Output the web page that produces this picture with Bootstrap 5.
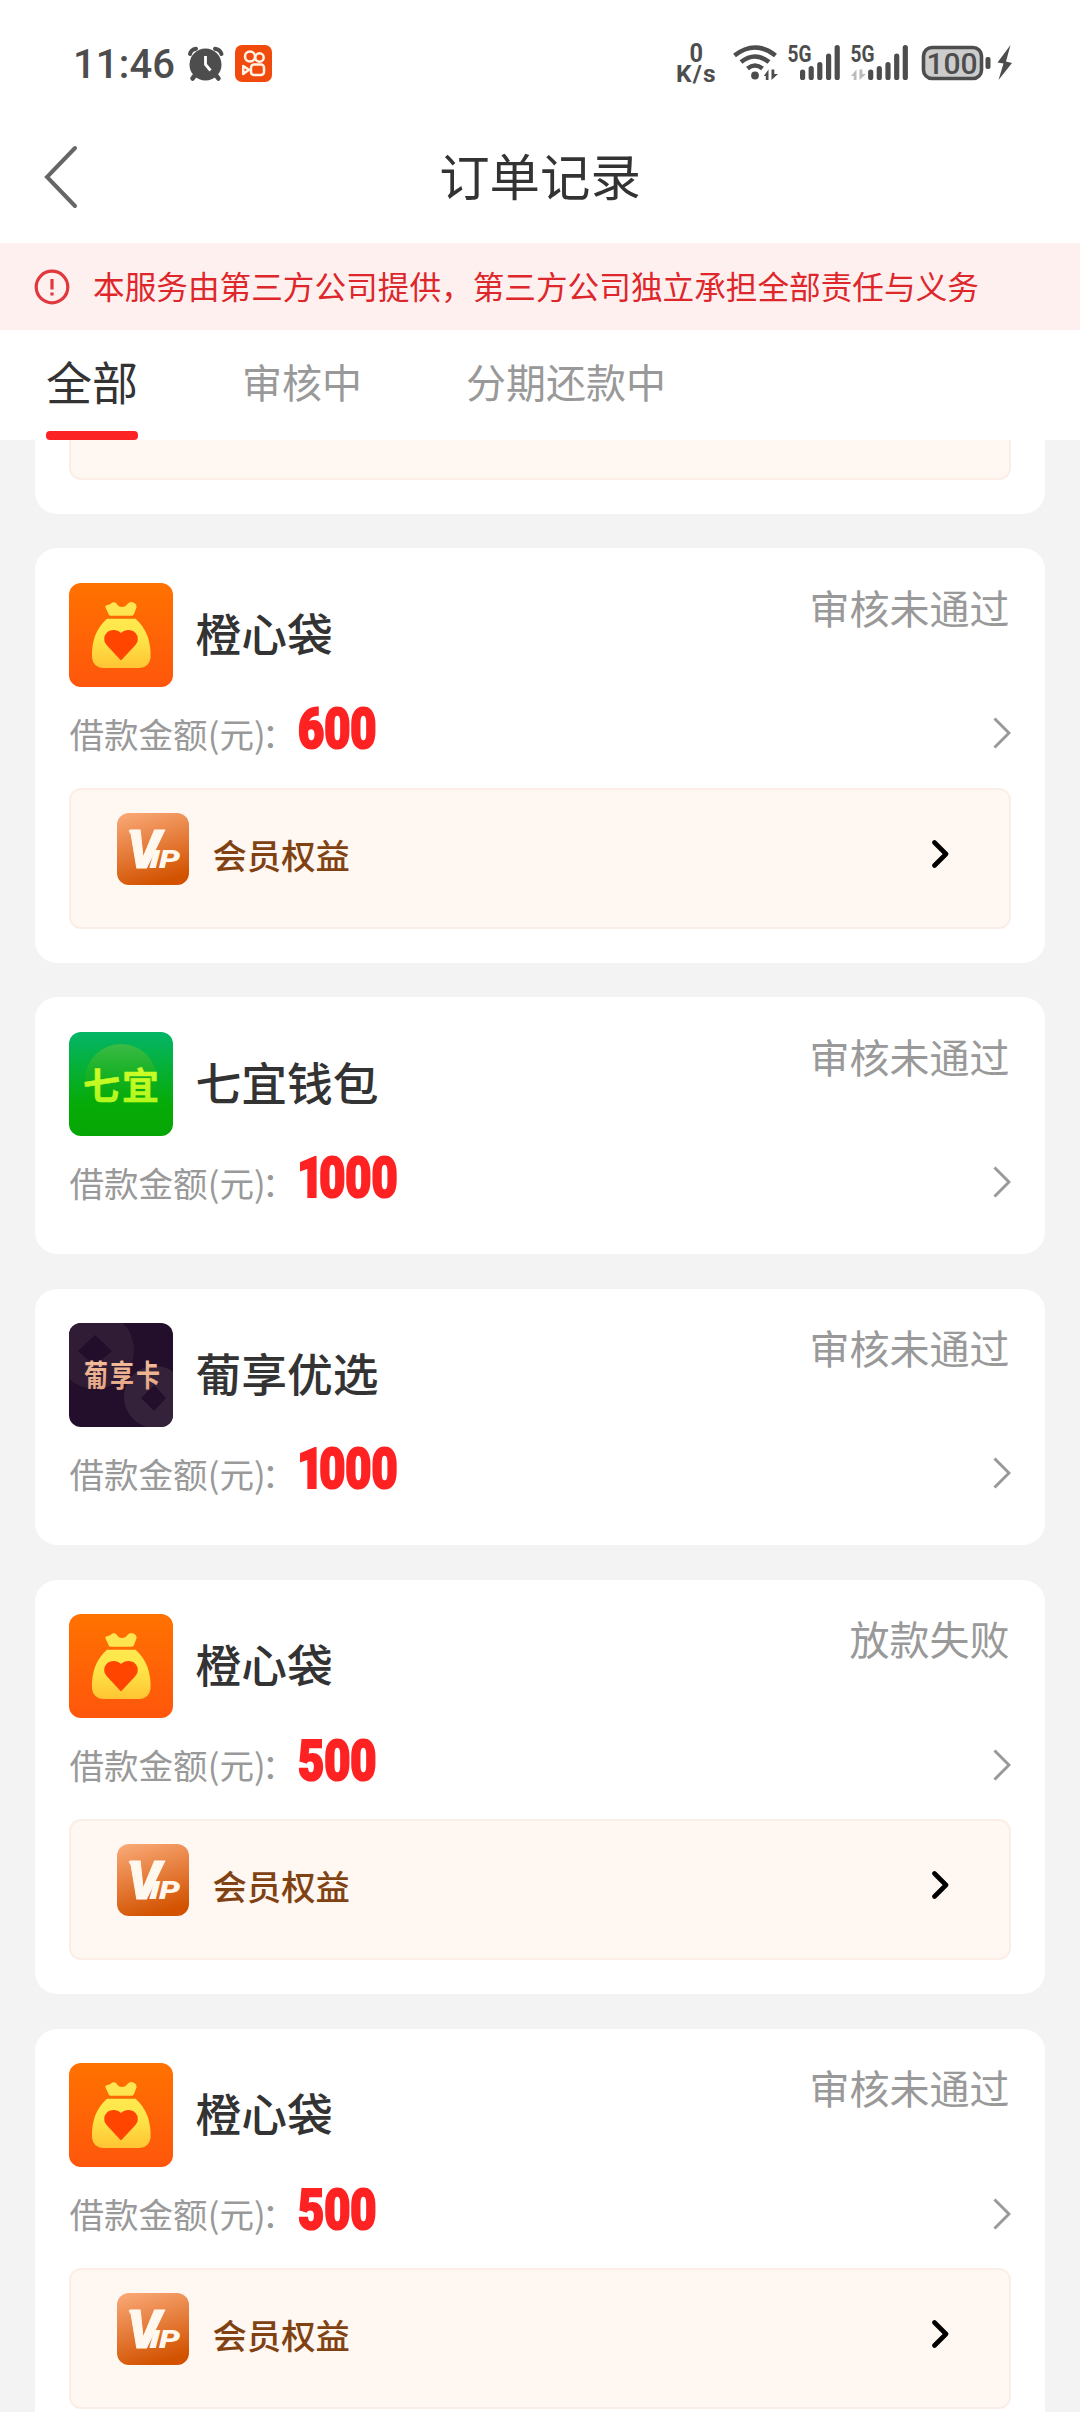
<!DOCTYPE html>
<html lang="zh-CN">
<head>
<meta charset="utf-8">
<meta name="viewport" content="width=device-width, initial-scale=1">
<title>订单记录</title>
<link href="https://cdn.jsdelivr.net/npm/bootstrap@5.3.0/dist/css/bootstrap.min.css" rel="stylesheet">
<style>
  body { font-family: "Noto Sans CJK SC", sans-serif; background: #f3f3f3; color: #333; height: 2412px; overflow: hidden; line-height: 1; }
  svg { display: block; flex: none; }
  svg text { font-family: Roboto, sans-serif; }
  .cjk-logo { font-family: "Noto Sans CJK SC", sans-serif !important; }
  .status-bar { height: 112px; padding: 14px 60px 0 66px; }
  .title-bar { height: 130.5px; padding: 0 40px; }
  .title-bar h1 { font-size: 50.4px; font-weight: 400; line-height: 1; padding-bottom: 4px; }
  .side-slot { width: 60px; }
  .notice { height: 87px; padding: 0 34px; background: #fff0f0; color: #dd272b; font-size: 31.65px; gap: 23px; }
  .notice svg { margin-top: 1px; }
  .tab-strip { height: 110.5px; padding-left: 46px; }
  .tab-strip .nav-link { padding: 0 0 7px; color: #999; font-size: 40px; display: flex; align-items: center; height: 100%; line-height: 1; }
  .tab-strip .nav-link.active { color: #333; font-size: 46px; position: relative; padding-bottom: 10px; }
  .tab-strip .nav-link + .nav-link { margin-left: 104px; }
  .tab-strip .nav-link.active::after { content: ""; position: absolute; left: 0; right: 0; bottom: 0; height: 9.5px; border-radius: 4px; background: #fc2324; }
  .orders { padding: 0 35px; gap: 34.7px; }
  .order { border: 0; border-radius: 22px; padding: 34.4px 34.4px 0; height: 256.4px; color: #333; flex: none; }
  .order.with-vip { height: 414.4px; }
  .order.cut { height: 73.7px; padding-top: 0; border-radius: 0 0 22px 22px; }
  .logo { width: 104px; height: 104px; }
  .shop { font-size: 45.8px; font-weight: 500; margin-left: 22px; padding-bottom: 4px; }
  .state { font-size: 40px; color: #999; padding-top: 4px; margin-right: 1px; }
  .amount-row { height: 95px; padding-bottom: 2px; }
  .label-text { font-size: 34.6px; color: #999; white-space: nowrap; }
  .colon { margin-left: -4px; }
  .money { font-family: Roboto, sans-serif; font-weight: 900; font-size: 55px; color: #ff2222; transform: scaleX(.82); transform-origin: 0 50%; -webkit-text-stroke: 2.2px #ff2222; line-height: 1; padding-bottom: 7px; margin-left: 2px; }
  .money .one { margin: 0 -5px 0 -1px; }
  .vip-box { height: 141px; margin-top: 6.4px; background: #fff7f1; border: 2px solid #fbeee6; border-radius: 12px; padding: 23px 60px 0 46px; }
  .vip-box.cut-box { height: 39.7px; margin-top: 0; border-top: 0; border-radius: 0 0 12px 12px; }
  .vip-name { font-size: 34.4px; font-weight: 500; color: #804213; margin-left: 23px; padding-top: 24px; }
  .vip-arrow { margin-top: 27px; }
</style>
</head>
<body>
<svg width="0" height="0" class="position-absolute" aria-hidden="true">
  <defs>
    <linearGradient id="gOrange" x1="0" y1="0" x2="0" y2="1"><stop offset="0" stop-color="#ff7200"/><stop offset="1" stop-color="#ff560c"/></linearGradient>
    <linearGradient id="gGold" x1="0" y1="0" x2="0" y2="1"><stop offset="0" stop-color="#ffe94f"/><stop offset=".4" stop-color="#fee548"/><stop offset="1" stop-color="#ffc433"/></linearGradient>
    <linearGradient id="gGreen" x1="0" y1="0" x2="0" y2="1"><stop offset="0" stop-color="#04b567"/><stop offset=".7" stop-color="#06ab06"/><stop offset="1" stop-color="#05a505"/></linearGradient>
    <linearGradient id="gDisc" x1="0" y1="0" x2="0" y2="1"><stop offset="0" stop-color="#3dbb45"/><stop offset=".7" stop-color="#0aac0a" stop-opacity=".6"/><stop offset="1" stop-color="#06a906" stop-opacity="0"/></linearGradient>
    <linearGradient id="gLime" x1="0" y1="0" x2="0" y2="1"><stop offset="0" stop-color="#dcff2a"/><stop offset="1" stop-color="#a8f51c"/></linearGradient>
    <linearGradient id="gVip" x1=".2" y1="0" x2=".5" y2="1"><stop offset="0" stop-color="#f8a673"/><stop offset="1" stop-color="#d25200"/></linearGradient>
    <linearGradient id="gRose" x1="0" y1="0" x2="0" y2="1"><stop offset="0" stop-color="#f8c4a2"/><stop offset="1" stop-color="#e0a080"/></linearGradient>
    <clipPath id="tileClip"><rect width="104" height="104" rx="12"/></clipPath>
  </defs>
  <symbol id="bag" viewBox="0 0 104 104">
    <rect width="104" height="104" rx="12" fill="url(#gOrange)"/>
    <path d="M40 32 L36.500 24.500 Q36 22.500 38.500 22 Q40 22 42 20.500 Q45 18 47.500 20.500 Q49.500 24 53 24 Q56.500 24 58.500 21 Q61 18.200 64.500 19.500 Q68 21 67.500 24.500 L64.800 31.500 Q64 32.800 62.500 32.800 L42 32.800 Q40.500 32.800 40 32Z" fill="#ffe550"/>
    <path d="M38 35.800 H66.500 Q74 42 78.500 53 Q82 63 81.500 75 Q80 84.500 70.500 85 H34 Q24.500 84.500 23 75 Q22.500 63 26 53 Q30.500 42 38 35.800Z" fill="url(#gGold)"/>
    <path d="M52 77.500 L38 62.500 Q34 58 35.600 53 Q38 47 44.500 47 Q49 47 52 50 Q55 47 59.500 47 Q66 47 68.400 53 Q70 58 66 62.500Z" fill="#ff4500"/>
  </symbol>
  <symbol id="vipTile" viewBox="0 0 72 72">
    <rect width="72" height="72" rx="12" fill="url(#gVip)"/>
    <path d="M11.500 17.200H22V20.500H13Z" fill="#fff8ee"/>
  </symbol>
  <symbol id="next" viewBox="0 0 18 32"><path d="M1.500 1.500 L16 16 L1.500 30.500" fill="none" stroke="#999" stroke-width="3"/></symbol>
  <symbol id="nextBold" viewBox="0 0 17 28"><path d="M2.500 2.500 L14 14 L2.500 25.500" fill="none" stroke="#000" stroke-width="4.600" stroke-linecap="round" stroke-linejoin="round"/></symbol>
</svg>

<header class="bg-white">
  <div class="status-bar d-flex align-items-center justify-content-between">
    <svg width="214" height="60" viewBox="66 33 214 60">
      <text x="73" y="77.500" font-size="40" font-weight="500" fill="#4d4d4d" textLength="102">11:46</text>
      <g stroke="#4d4d4d" fill="none" stroke-linecap="round">
        <path d="M190 54 Q191 49.500 196 48.800" stroke-width="4"/><path d="M215 48.800 Q220 49.500 221.500 54" stroke-width="4"/>
        <path d="M196 74 L192.500 78.500 M215 74 L218.500 78.500" stroke-width="4.500"/>
        <circle cx="205.500" cy="64.500" r="16" fill="#4d4d4d" stroke="none"/>
        <path d="M205.500 56 V64.500 L210.500 70.500" stroke="#fff" stroke-width="2.800" stroke-linecap="butt"/>
      </g>
      <rect x="235" y="45" width="37" height="37" rx="7" fill="#f04a0c"/>
      <g stroke="#fff3e8" fill="none" stroke-width="2.500">
        <circle cx="250" cy="56.500" r="5"/><circle cx="259.500" cy="57.500" r="4.200"/>
        <rect x="251" y="64.500" width="13" height="10.500" rx="3"/>
        <path d="M249 69.800 L243.200 66 V74 Z" stroke-linejoin="round"/>
      </g>
    </svg>
    <svg width="344" height="60" viewBox="676 33 344 60" fill="#4d4d4d">
      <text x="689.500" y="61.500" font-size="25" font-weight="700" textLength="13.500" lengthAdjust="spacingAndGlyphs">0</text>
      <text x="676" y="81.500" font-size="24.500" font-weight="700" textLength="39.500">K/s</text>
      <g fill="none" stroke="#4d4d4d" stroke-width="4.600">
        <path d="M734.500 55.500 Q755 39.500 775.500 55.500"/><path d="M741 62 Q755 51 769 62"/><path d="M747.500 68.500 Q755 62.500 762.500 68.500"/>
      </g>
      <circle cx="755" cy="75.500" r="3.900"/>
      <path d="M768.500 69.500V80H765.800V76H763.800ZM771.500 69.500V80L778 74H774.300V69.500Z"/>
      <text x="787.500" y="61.500" font-size="23" font-weight="700" textLength="24" lengthAdjust="spacingAndGlyphs">5G</text>
      <path stroke="#4d4d4d" stroke-width="5.200" stroke-linecap="round" d="M802.600 72V77.500M811.200 68.500V77.500M819.800 64.500V77.500M828.600 56V77.500M837.200 47.500V77.500"/>
      <text x="850.500" y="61.500" font-size="23" font-weight="700" textLength="24" lengthAdjust="spacingAndGlyphs">5G</text>
      <path fill="#bbb" d="M856.500 69.500V80H853.800V76H851ZM859.500 69.500V80L866 74H862.300V69.500Z"/>
      <path stroke="#4d4d4d" stroke-width="5.200" stroke-linecap="round" d="M870.700 72V77.500M879.300 68.500V77.500M888 64.500V77.500M896.700 56V77.500M905.300 47.500V77.500"/>
      <rect x="923.500" y="47.500" width="58" height="31" rx="8.500" fill="#ccc" stroke="#4d4d4d" stroke-width="3.600"/>
      <text x="926.500" y="73.500" font-size="30" font-weight="500" textLength="51">100</text>
      <rect x="985.500" y="57" width="5" height="12" rx="2"/>
      <path d="M1010.500 45 L997.500 62.500 L1003.500 63.500 L998.500 80 L1012 63 L1006 61.500Z"/>
    </svg>
  </div>
  <div class="title-bar d-flex align-items-center justify-content-between">
    <div class="side-slot"><svg width="42" height="64" viewBox="0 0 42 64"><path d="M35 3 L7 32 L35 61" fill="none" stroke="#666" stroke-width="4" stroke-linecap="round"/></svg></div>
    <h1 class="m-0">订单记录</h1>
    <div class="side-slot"></div>
  </div>
  <div class="notice d-flex align-items-center">
    <svg width="36" height="36" viewBox="0 0 36 36"><circle cx="18" cy="18" r="15.800" fill="none" stroke="#e0383c" stroke-width="3.200"/><path d="M18 10V20.500M18 23.500V26.500" stroke="#e0383c" stroke-width="3.200"/></svg>
    <span class="text-nowrap">本服务由第三方公司提供，第三方公司独立承担全部责任与义务</span>
  </div>
  <nav class="tab-strip nav flex-nowrap">
    <a class="nav-link active" href="#">全部</a>
    <a class="nav-link" href="#">审核中</a>
    <a class="nav-link" href="#">分期还款中</a>
  </nav>
</header>

<main class="orders d-flex flex-column">
  <section class="card order cut"><div class="vip-box cut-box"></div></section>

  <section class="card order with-vip">
    <div class="d-flex">
      <svg class="logo"><use href="#bag"/></svg>
      <div class="shop align-self-center">橙心袋</div>
      <div class="state ms-auto">审核未通过</div>
    </div>
    <div class="amount-row d-flex align-items-center">
      <span class="label-text">借款金额(元)<span class="colon">：</span></span><span class="money">600</span>
      <svg class="ms-auto" width="18" height="32"><use href="#next"/></svg>
    </div>
    <div class="vip-box d-flex align-items-start">
      <svg width="72" height="72" viewBox="0 0 72 72"><use href="#vipTile"/><g fill="#fff8ee" font-weight="900" font-style="italic"><text x="10" y="55" font-size="53" stroke="#fff8ee" textLength="34" lengthAdjust="spacingAndGlyphs">V</text><text x="32" y="55" font-size="25" textLength="11" lengthAdjust="spacingAndGlyphs">I</text><text x="42" y="55" font-size="25" textLength="21" lengthAdjust="spacingAndGlyphs">P</text></g></svg>
      <div class="vip-name">会员权益</div>
      <svg class="vip-arrow ms-auto" width="17" height="28"><use href="#nextBold"/></svg>
    </div>
  </section>

  <section class="card order">
    <div class="d-flex">
      <svg class="logo" viewBox="0 0 104 104">
        <rect width="104" height="104" rx="12" fill="url(#gGreen)"/>
        <circle cx="52" cy="48" r="36" fill="url(#gDisc)"/>
        <text class="cjk-logo" x="14" y="68" font-size="37" font-weight="700" fill="url(#gLime)" stroke="#c4fa22" stroke-width=".5" textLength="76">七宜</text>
      </svg>
      <div class="shop align-self-center">七宜钱包</div>
      <div class="state ms-auto">审核未通过</div>
    </div>
    <div class="amount-row d-flex align-items-center">
      <span class="label-text">借款金额(元)<span class="colon">：</span></span><span class="money"><span class="one">1</span>000</span>
      <svg class="ms-auto" width="18" height="32"><use href="#next"/></svg>
    </div>
  </section>

  <section class="card order">
    <div class="d-flex">
      <svg class="logo" viewBox="0 0 104 104">
        <g clip-path="url(#tileClip)">
          <rect width="104" height="104" fill="#230f2b"/>
          <circle cx="26" cy="27" r="39" fill="#301d35"/>
          <path d="M26 12 L43 28 L26 43 L9 28Z" fill="#220e2a"/>
          <circle cx="86" cy="74" r="31" fill="#34223a"/>
          <path d="M85 62 L97 75 L85 88 L72 75Z" fill="#230f2b"/>
        </g>
        <text class="cjk-logo" transform="scale(1 1.25)" x="15" y="50.800" font-size="24" font-weight="700" fill="url(#gRose)" textLength="76">葡享卡</text>
      </svg>
      <div class="shop align-self-center">葡享优选</div>
      <div class="state ms-auto">审核未通过</div>
    </div>
    <div class="amount-row d-flex align-items-center">
      <span class="label-text">借款金额(元)<span class="colon">：</span></span><span class="money"><span class="one">1</span>000</span>
      <svg class="ms-auto" width="18" height="32"><use href="#next"/></svg>
    </div>
  </section>

  <section class="card order with-vip">
    <div class="d-flex">
      <svg class="logo"><use href="#bag"/></svg>
      <div class="shop align-self-center">橙心袋</div>
      <div class="state ms-auto">放款失败</div>
    </div>
    <div class="amount-row d-flex align-items-center">
      <span class="label-text">借款金额(元)<span class="colon">：</span></span><span class="money">500</span>
      <svg class="ms-auto" width="18" height="32"><use href="#next"/></svg>
    </div>
    <div class="vip-box d-flex align-items-start">
      <svg width="72" height="72" viewBox="0 0 72 72"><use href="#vipTile"/><g fill="#fff8ee" font-weight="900" font-style="italic"><text x="10" y="55" font-size="53" stroke="#fff8ee" textLength="34" lengthAdjust="spacingAndGlyphs">V</text><text x="32" y="55" font-size="25" textLength="11" lengthAdjust="spacingAndGlyphs">I</text><text x="42" y="55" font-size="25" textLength="21" lengthAdjust="spacingAndGlyphs">P</text></g></svg>
      <div class="vip-name">会员权益</div>
      <svg class="vip-arrow ms-auto" width="17" height="28"><use href="#nextBold"/></svg>
    </div>
  </section>

  <section class="card order with-vip">
    <div class="d-flex">
      <svg class="logo"><use href="#bag"/></svg>
      <div class="shop align-self-center">橙心袋</div>
      <div class="state ms-auto">审核未通过</div>
    </div>
    <div class="amount-row d-flex align-items-center">
      <span class="label-text">借款金额(元)<span class="colon">：</span></span><span class="money">500</span>
      <svg class="ms-auto" width="18" height="32"><use href="#next"/></svg>
    </div>
    <div class="vip-box d-flex align-items-start">
      <svg width="72" height="72" viewBox="0 0 72 72"><use href="#vipTile"/><g fill="#fff8ee" font-weight="900" font-style="italic"><text x="10" y="55" font-size="53" stroke="#fff8ee" textLength="34" lengthAdjust="spacingAndGlyphs">V</text><text x="32" y="55" font-size="25" textLength="11" lengthAdjust="spacingAndGlyphs">I</text><text x="42" y="55" font-size="25" textLength="21" lengthAdjust="spacingAndGlyphs">P</text></g></svg>
      <div class="vip-name">会员权益</div>
      <svg class="vip-arrow ms-auto" width="17" height="28"><use href="#nextBold"/></svg>
    </div>
  </section>
</main>
<script src="https://cdn.jsdelivr.net/npm/bootstrap@5.3.0/dist/js/bootstrap.bundle.min.js"></script>
</body>
</html>
